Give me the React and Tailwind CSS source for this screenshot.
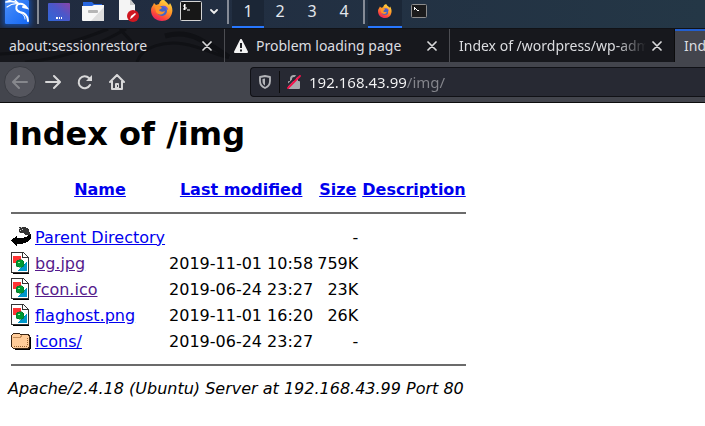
import React from "react";

function KaliIcon() {
  return (
    <svg width="24" height="24" viewBox="0 0 24 24" aria-hidden="true">
      <defs>
        <linearGradient id="kali" x1="0" y1="0" x2="1" y2="1">
          <stop offset="0" stopColor="#4b8ffb" />
          <stop offset="1" stopColor="#1467f2" />
        </linearGradient>
      </defs>
      <rect width="24" height="24" rx="1" fill="url(#kali)" />
      <g fill="none" stroke="#fff" strokeLinecap="round">
        <path d="M1 2C5 1 10 1 14 4" strokeWidth="1.6" />
        <path d="M2 7C6 4 10 3 14 4" strokeWidth="1.2" />
        <path d="M3 0l3 1M10 0l3 3" strokeWidth="1.2" />
        <path d="M13 4C10 7 11 11 15 12C20 13 23 15 23 21" strokeWidth="2" />
        <path d="M13 4C17 3 20 5 22 8L18 7" strokeWidth="2" />
        <path d="M14 12C18 14 20 16 20 19" strokeWidth="1" />
      </g>
    </svg>
  );
}

function DesktopIcon() {
  return (
    <svg width="22" height="18" viewBox="0 0 22 18" aria-hidden="true">
      <defs>
        <linearGradient id="desk" x1="0" y1="1" x2="1" y2="0">
          <stop offset="0" stopColor="#2f67d8" />
          <stop offset=".55" stopColor="#4c57c9" />
          <stop offset="1" stopColor="#8a44a8" />
        </linearGradient>
      </defs>
      <rect width="22" height="18" rx="1" fill="url(#desk)" />
      <path d="M8 14h2v2H8zM11 14h1v2h-1zM13 14h1v2h-1z" fill="#fff" />
    </svg>
  );
}

function FilesIcon() {
  return (
    <svg width="22" height="20" viewBox="0 0 22 20" aria-hidden="true">
      <path d="M1 1h9l2 2h8v6H1z" fill="#2766df" />
      <path d="M0 5h10l2-1h10v15q0 1-1 1H1q-1 0-1-1z" fill="#f7f7f7" />
      <path d="M22 6v14H9z" fill="#dedede" />
      <rect x="6" y="9" width="10" height="3" rx="1" fill="#b5b5b5" />
    </svg>
  );
}

function EditorIcon() {
  return (
    <svg width="21" height="23" viewBox="0 0 21 23" aria-hidden="true">
      <path d="M1 0h11l5 6v15H1z" fill="#f4f4f4" />
      <path d="M12 0v6h5z" fill="#c9c9c9" />
      <circle cx="15" cy="17" r="6" fill="#cf1720" />
      <path d="M12 20l1-3 4-3 1 1-4 4z" fill="#fff" />
    </svg>
  );
}

function FirefoxIcon({ id, className }) {
  return (
    <svg viewBox="0 0 22 22" className={className} aria-hidden="true">
      <defs>
        <linearGradient id={id} x1=".8" y1="0" x2=".3" y2="1">
          <stop offset="0" stopColor="#ffe04a" />
          <stop offset=".45" stopColor="#ff9a26" />
          <stop offset=".8" stopColor="#fb423f" />
          <stop offset="1" stopColor="#e42168" />
        </linearGradient>
      </defs>
      <path
        d="M3 4l2 2 3-1C9 2 10 1 13 0c0 2 3 3 5 6l1-2c2 3 3 7 2 10-1 5-5 8-10 8C5 22 0 18 0 11 0 8 2 7 3 4z"
        fill={`url(#${id})`}
      />
      <circle cx="11" cy="12" r="5" fill="#4265c8" />
      <path d="M4 8c3-2 6-1 7 1l-3 2c1 2 4 2 6 1-1 4-6 5-9 1z" fill="#ff9327" />
      <path d="M11 7c3-1 6 1 6 4l-3-2z" fill="#7055d7" />
    </svg>
  );
}

function TerminalIcon() {
  return (
    <svg width="22" height="20" viewBox="0 0 22 20" aria-hidden="true">
      <rect x=".5" y=".5" width="21" height="19" rx="1" fill="#171717" stroke="#d4d4d4" />
      <path d="M6 4H4v2h2v2H3M4.500 3v6M7 9h3" fill="none" stroke="#fff" />
    </svg>
  );
}

function SmallTerminalIcon() {
  return (
    <svg width="16" height="14" viewBox="0 0 16 14" aria-hidden="true">
      <rect x=".5" y=".5" width="15" height="13" rx="1" fill="#1b1b1c" stroke="#8d8d8d" />
      <path d="M3.500 3v3M4 4l2 2M6 6.500h2" fill="none" stroke="#fff" />
    </svg>
  );
}

function CloseIcon() {
  return (
    <svg width="10" height="10" viewBox="0 0 10 10" aria-hidden="true">
      <path d="M1 1l8 8M9 1L1 9" stroke="#d9d9da" strokeWidth="1.7" strokeLinecap="round" />
    </svg>
  );
}

function WarningIcon() {
  return (
    <svg width="14" height="14" viewBox="0 0 14 14" className="mr-2 shrink-0" aria-hidden="true">
      <path d="M7 1L1 13h12z" fill="#f3f3f3" stroke="#f3f3f3" strokeWidth="2" strokeLinejoin="round" />
      <path d="M7 4v5M7 10.500v2" stroke="#1b1c21" strokeWidth="2" />
    </svg>
  );
}

function ArrowIcon({ flip }) {
  return (
    <svg width="16" height="16" viewBox="0 0 16 16" className={flip ? "-scale-x-100" : ""} aria-hidden="true">
      <path d="M1 8h13M9 2l6 6-6 6" fill="none" stroke="currentColor" strokeWidth="2" strokeLinecap="round" strokeLinejoin="round" />
    </svg>
  );
}

function ReloadIcon() {
  return (
    <svg width="16" height="16" viewBox="0 0 16 16" aria-hidden="true">
      <path d="M12 4A6 6 0 1 0 13 11" fill="none" stroke="currentColor" strokeWidth="2" strokeLinecap="round" />
      <path d="M15 1v6H9l2-2 2-2z" fill="currentColor" />
    </svg>
  );
}

function HomeIcon() {
  return (
    <svg width="16" height="16" viewBox="0 0 16 16" aria-hidden="true">
      <path d="M1 8l7-7 7 7M3 7v8h10V7" fill="none" stroke="currentColor" strokeWidth="2" strokeLinecap="round" strokeLinejoin="round" />
      <path d="M6 15v-5q0-1 1-1h2q1 0 1 1v5z" fill="currentColor" />
      <path d="M8.500 11v2" stroke="#43454d" />
    </svg>
  );
}

function ShieldIcon() {
  return (
    <svg width="12" height="14" viewBox="0 0 12 14" aria-hidden="true">
      <path d="M6 1l5 1v4c0 3-1.500 5.500-5 7C2.500 11.500 1 9 1 6V2z" fill="none" stroke="#b3b4b8" strokeWidth="1.800" strokeLinejoin="round" />
      <path d="M6 3.500v7C4.300 9.500 3.500 8 3.500 6V4z" fill="#b3b4b8" />
    </svg>
  );
}

function InsecureIcon() {
  return (
    <svg width="14" height="14" viewBox="0 0 14 14" aria-hidden="true">
      <path d="M4 7V4a3 3 0 0 1 6 0v3" fill="none" stroke="#a9aaae" strokeWidth="2" />
      <rect x="1" y="6" width="12" height="8" rx="1" fill="#a9aaae" />
      <path d="M-1 12L12-1" stroke="#272933" strokeWidth="2" />
      <path d="M1 13L13 1" stroke="#f5114b" strokeWidth="1.800" strokeLinecap="round" />
    </svg>
  );
}

function BackIcon() {
  return (
    <svg width="20" height="22" viewBox="0 0 20 22" shapeRendering="crispEdges" className="block" aria-hidden="true">
      <path d="M8 1h5l3 1 2 2 1 3v2h-4l-3-2H8z" fill="#333" />
      <path d="M8 2h1v1H8zM10 1h1v1h-1zM9 4h1v1H9zM11 3h1v1h-1zM8 6h1v1H8z" fill="#ccc" />
      <path d="M0 14l6-4v2h5l4-1 3-2 2-2v5l-2 3-4 2-4 1H6v2H5z" fill="#000" />
    </svg>
  );
}

function ImageIcon() {
  return (
    <svg width="20" height="22" viewBox="0 0 20 22" shapeRendering="crispEdges" className="block" aria-hidden="true">
      <path d="M2 6h16v16H2z" fill="#000" />
      <path d="M0 0h12l6 6v15H0z" fill="#333" />
      <path d="M1 1h10v5h6v14H1z" fill="#fff" />
      <path d="M12 1l4 4h-4z" fill="#fff" />
      <path d="M2 4h8v7H2z" fill="#f33" />
      <path d="M16 9v10H7z" fill="#0099cc" />
      <circle cx="9" cy="11.500" r="4" fill="#009933" stroke="#036322" strokeWidth=".5" />
      <path d="M7 10h2v1H7z" fill="#9f9" />
    </svg>
  );
}

function FolderIcon() {
  return (
    <svg width="20" height="22" viewBox="0 0 20 22" shapeRendering="crispEdges" className="block" aria-hidden="true">
      <path d="M2 6h17l1 2v10l-2 2H4z" fill="#000" />
      <path d="M0 5l2-2h6l2 1h7l2 2v11l-2 2H2l-2-2z" fill="#3b2614" />
      <path d="M1 5l1-1h6l2 1h6l2 2v10l-2 1H2l-1-1z" fill="#ffcc99" />
      <path d="M2 7.500h7l2-2" fill="none" stroke="#c48d5a" />
      <path d="M3 16.500h13M16.500 8v8" fill="none" stroke="#996633" strokeDasharray="1 1" />
    </svg>
  );
}

function PanelDivider({ className }) {
  return <span className={`h-6 w-[2px] shrink-0 bg-[#858b96] ${className}`} />;
}

function Taskbar() {
  return (
    <nav aria-label="Desktop panel" className="flex h-7 overflow-hidden bg-linear-to-r from-[#202a3f] to-[#243746] pl-[5px]">
      <button aria-label="Applications" className="h-6 w-6 shrink-0 shadow-[0_0_5px_2px_#174da5]"><KaliIcon /></button>
      <PanelDivider className="ml-2" />
      <div className="flex h-5 shrink-0 items-center pl-[9px]">
        <button aria-label="Show desktop" className="mt-[3px]"><DesktopIcon /></button>
        <button aria-label="Files" className="ml-3 mt-[2px]"><FilesIcon /></button>
        <button aria-label="Text editor" className="ml-[14px]"><EditorIcon /></button>
        <button aria-label="Firefox" className="ml-3"><FirefoxIcon id="fox-large" className="size-[22px]" /></button>
        <button aria-label="Terminal" className="ml-[7px] mt-[2px]"><TerminalIcon /></button>
        <button aria-label="More terminals" className="ml-2 mt-1">
          <svg width="8" height="6" viewBox="0 0 8 6" aria-hidden="true">
            <path d="M1 1l3 3 3-3" fill="none" stroke="#eee" strokeWidth="1.800" strokeLinecap="round" />
          </svg>
        </button>
      </div>
      <PanelDivider className="ml-[9px]" />
      <div className="ml-[3px] flex font-['Noto_Sans'] text-base leading-[22px] text-[#e3e7ed]">
        {["1", "2", "3", "4"].map((n) => (
          <button
            key={n}
            className={`flex w-8 items-start justify-center border-b-2 ${n === "1" ? "border-[#2777ff] bg-[#1b2636]" : "border-transparent"}`}
          >
            {n}
          </button>
        ))}
      </div>
      <PanelDivider className="ml-[3px]" />
      <button aria-label="Firefox window" className="ml-[3px] flex w-[34px] justify-center border-b-2 border-[#2777ff] bg-[#1b2737] pt-1">
        <FirefoxIcon id="fox-small" className="size-[14px]" />
      </button>
      <button aria-label="Terminal window" className="flex w-[34px] justify-center pt-1"><SmallTerminalIcon /></button>
    </nav>
  );
}

const tabs = [
  { title: "about:sessionrestore" },
  { title: "Problem loading page", warning: true },
  { title: "Index of /wordpress/wp-admin", fade: true },
  { title: "Index of /img", active: true },
];

function TabStrip() {
  return (
    <div className="relative flex h-[34px] overflow-hidden border-t border-[#111216] bg-[#17181d] font-['Noto_Sans'] text-sm text-[#dcdde0]">
      <svg className="absolute left-0 top-0" width="230" height="33" viewBox="0 0 230 33" fill="none" aria-hidden="true">
        <path d="M0 25C40 24 75 13 108 0M25 33C65 30 100 15 126 0M120 0l20 22M137 33c5-16 28-21 47-18s35 13 45 13" stroke="#101115" strokeWidth="3" />
        <path d="M165 7q18-5 34 3t30 18" stroke="#101115" strokeWidth="5" />
      </svg>
      {tabs.map((tab) => (
        <div
          key={tab.title}
          className={`relative flex w-[225px] shrink-0 items-center border-r pl-[9px] pr-3 ${tab.active ? "border-[#43454d] bg-[#43454d] shadow-[inset_0_2px_#235fce]" : tab.fade ? "border-[#0c0c0d]" : "border-[#4c4d52]"}`}
        >
          {tab.warning && <WarningIcon />}
          <button
            className={`min-w-0 flex-1 overflow-hidden whitespace-nowrap text-left ${tab.fade ? "mask-r-from-84% mask-r-to-100%" : ""}`}
          >
            {tab.title}
          </button>
          <button aria-label={`Close ${tab.title}`} className="ml-[6px] shrink-0"><CloseIcon /></button>
        </div>
      ))}
    </div>
  );
}

function Toolbar() {
  return (
    <div className="flex h-[41px] items-center border-b border-[#0c0c0d] bg-[#43454d] pl-1 text-[#d8d8d9]">
      <button aria-label="Back" className="flex size-8 shrink-0 items-center justify-center rounded-full border border-[#383a41] bg-[#55565e] text-[#86878c]">
        <ArrowIcon flip />
      </button>
      <div className="ml-[9px] flex shrink-0 gap-4">
        <button aria-label="Forward"><ArrowIcon /></button>
        <button aria-label="Reload"><ReloadIcon /></button>
        <button aria-label="Home"><HomeIcon /></button>
      </div>
      <div className="ml-[125px] flex h-[30px] flex-1 items-center rounded-l-[4px] border border-r-0 border-[#101116] bg-[#272933] pl-2">
        <button aria-label="Tracking protection" className="shrink-0"><ShieldIcon /></button>
        <span className="ml-2 h-[22px] w-px bg-[#0c0c0d]" />
        <button aria-label="Connection is not secure" className="ml-[7px] shrink-0"><InsecureIcon /></button>
        <input
          aria-label="Address"
          defaultValue="192.168.43.99/img/"
          className="ml-2 min-w-0 flex-1 bg-linear-to-r from-[#f5f5f6] from-[98px] to-[#85868d] to-[98px] bg-clip-text font-['Noto_Sans'] text-[15px] leading-5 text-transparent outline-none"
        />
      </div>
    </div>
  );
}

const files = [
  { name: "Parent Directory", icon: BackIcon, date: "", size: "-" },
  { name: "bg.jpg", icon: ImageIcon, date: "2019-11-01 10:58", size: "759K", visited: true },
  { name: "fcon.ico", icon: ImageIcon, date: "2019-06-24 23:27", size: "23K", visited: true },
  { name: "flaghost.png", icon: ImageIcon, date: "2019-11-01 16:20", size: "26K" },
  { name: "icons/", icon: FolderIcon, date: "2019-06-24 23:27", size: "-" },
];

function Rule() {
  return (
    <tr>
      <td colSpan={5} className="p-px">
        <hr className="my-2 border-t-2 border-[#6b6b6b]" />
      </td>
    </tr>
  );
}

function Listing() {
  return (
    <main className="px-2 py-3 font-['DejaVu_Sans'] text-base leading-[19px] text-black">
      <h1 className="text-[32px] font-bold leading-[38px]">Index of /img</h1>
      <table className="mt-[22px] border-separate border-spacing-[2px] whitespace-nowrap">
        <thead>
          <tr className="h-6">
            <th className="w-[22px] p-px" />
            {["Name", "Last modified", "Size", "Description"].map((label) => (
              <th key={label} className="p-px text-center font-bold">
                <a href="#sort" className="text-[#0000ee] underline">{label}</a>
              </th>
            ))}
          </tr>
        </thead>
        <tbody>
          <Rule />
          {files.map(({ name, icon: Icon, date, size, visited }) => (
            <tr key={name}>
              <td className="p-px"><Icon /></td>
              <td className="p-px">
                <a href="#file" className={`underline ${visited ? "text-[#551a8b]" : "text-[#0000ee]"}`}>{name}</a>
              </td>
              <td className="p-px text-right">{date}</td>
              <td className="p-px text-right">{size}</td>
              <td className="p-px" />
            </tr>
          ))}
          <Rule />
        </tbody>
      </table>
      <address className="mt-[2px] italic">Apache/2.4.18 (Ubuntu) Server at 192.168.43.99 Port 80</address>
    </main>
  );
}

export default function App() {
  return (
    <div className="min-h-screen overflow-hidden bg-white">
      <Taskbar />
      <TabStrip />
      <Toolbar />
      <Listing />
    </div>
  );
}
